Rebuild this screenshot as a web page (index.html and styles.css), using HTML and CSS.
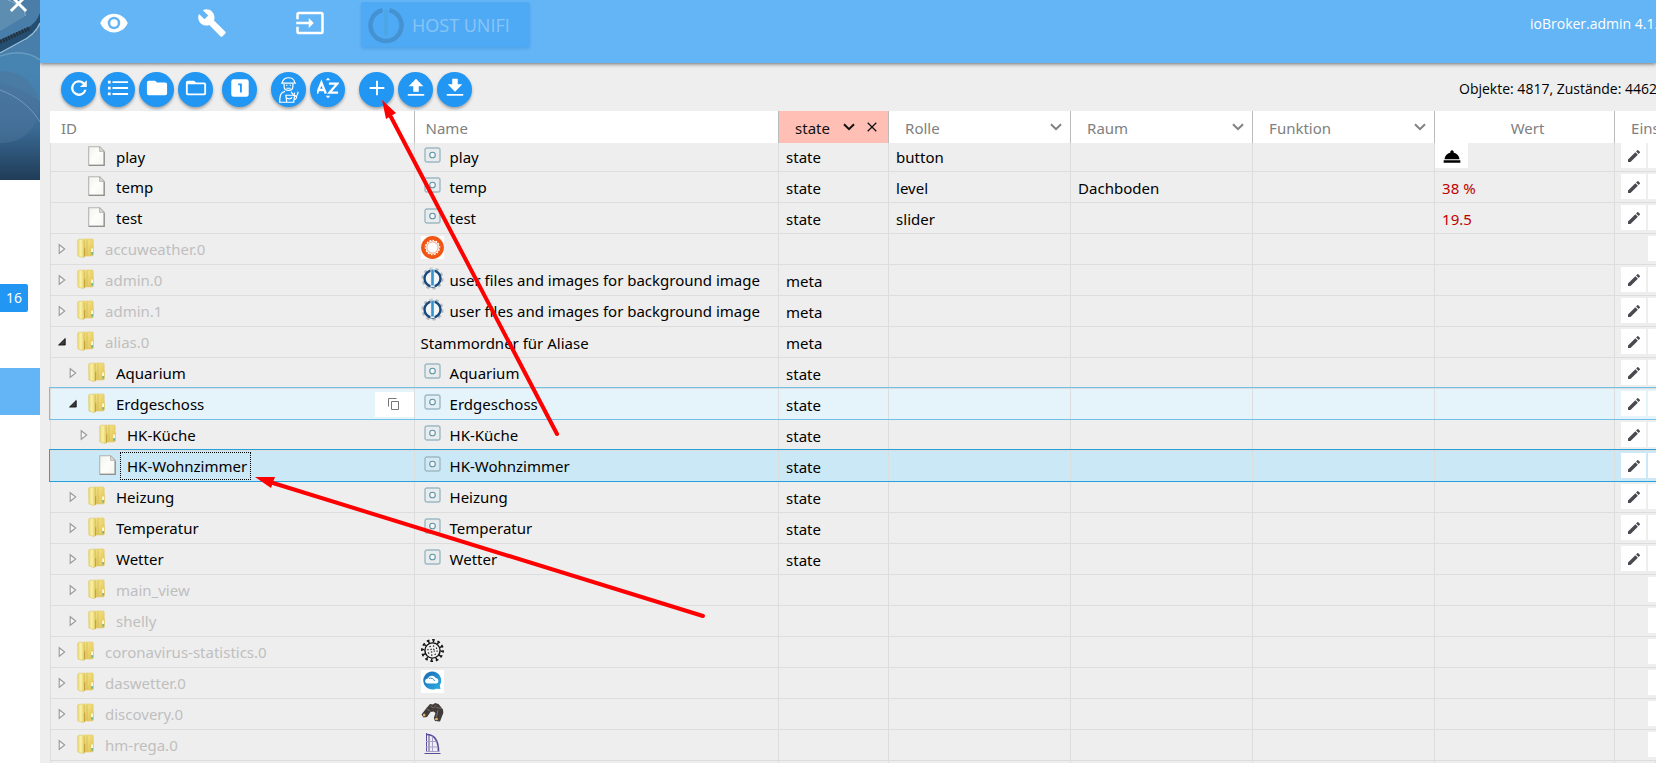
FILE: index.html
```html
<!DOCTYPE html>
<html lang="de">
<head>
<meta charset="utf-8">
<title>ioBroker.admin</title>
<link rel="stylesheet" href="styles.css">
</head>
<body>
<svg class="defs" aria-hidden="true">
  <defs>
    <linearGradient id="g-front" x1="0" x2="1" y1="0" y2="0"><stop offset="0" stop-color="#ead773"/><stop offset=".45" stop-color="#faf2a6"/><stop offset="1" stop-color="#dcc052"/></linearGradient>
    <linearGradient id="g-back" x1="0" x2="1" y1="0" y2="1"><stop offset="0" stop-color="#f7e98e"/><stop offset="1" stop-color="#dfc04e"/></linearGradient>
    <linearGradient id="g-doc" x1="0" x2="1" y1="0" y2="1"><stop offset="0" stop-color="#f1f3ec"/><stop offset=".5" stop-color="#fdfefb"/><stop offset="1" stop-color="#f3f5ef"/></linearGradient>
    <linearGradient id="g-photo" x1="0" x2="0" y1="0" y2="1"><stop offset="0" stop-color="#4b7da8"/><stop offset=".4" stop-color="#467fac"/><stop offset=".7" stop-color="#3b6c97"/><stop offset="1" stop-color="#1f3c57"/></linearGradient>
    <linearGradient id="g-cloud" x1="0" x2="1" y1="0" y2="1"><stop offset="0" stop-color="#1768b4"/><stop offset="1" stop-color="#2fb0e4"/></linearGradient>
  </defs>
  <symbol id="folder" viewBox="0 0 17 20">
    <path d="M7 1h8.200q1 0 1 1v6l.5 1v7.500L15.500 18H7z" fill="url(#g-back)" stroke="#e0cb74" stroke-width=".6"/>
    <path d="M10 1.500v16" stroke="#d3b650" stroke-width=".8"/>
    <path d="M.6 2.600Q1 1.200 2.200 1.200h4.200L8 2.600v15.600l-1.600 1.400L.9 18z" fill="url(#g-front)" stroke="#dcc76a" stroke-width=".6"/>
    <path d="M7 11v8l1.200-1V9z" fill="#b8912f" opacity=".7"/>
    <path d="M14.200 10.500h1.800V14h-1.800z" fill="#fffbe0"/><path d="M14.400 14.200h1.600v2.200h-1.600z" fill="#5fb7a5"/>
  </symbol>
  <symbol id="doc" viewBox="0 0 17 20">
    <path d="M.7.7h11l4.500 4.600v14H.7z" fill="url(#g-doc)" stroke="#b3b4b1" stroke-width="1.100"/>
    <path d="M.8 19.300h15.400V6" fill="none" stroke="#8f908d" stroke-width="1.200"/>
    <path d="M11.600.8v4.600h4.500z" fill="#deded9" stroke="#aaaba8" stroke-width=".8"/>
  </symbol>
  <symbol id="closed" viewBox="0 0 8 12"><path d="M1.200 1.700v8.600L6.700 6z" fill="#f7f7f7" stroke="#999" stroke-width="1.100"/></symbol>
  <symbol id="open" viewBox="0 0 8 12"><path d="M7.200 2.500v6.500H.6z" fill="#3a3a3a" stroke="#111" stroke-width=".9" stroke-linejoin="round"/></symbol>
  <symbol id="state" viewBox="0 0 17 16"><rect x="1" y="1" width="15" height="14" rx="2" fill="#dfe9ec" fill-opacity=".4" stroke="#9cb9c5" stroke-width="1.400"/><circle cx="8.500" cy="8" r="2.800" fill="#f3f7f8" stroke="#5f93a8" stroke-width="1.100"/></symbol>
  <symbol id="iob" viewBox="0 0 23 23"><circle cx="11.500" cy="11.500" r="9.900" fill="none" stroke="#b5b9bd" stroke-width="2.400" stroke-dasharray="3.100 3.100"/><circle cx="11.500" cy="11.500" r="8" fill="#f4f6f8" stroke="#174b80" stroke-width="2.400"/><rect x="9.500" y="1.500" width="4" height="18.500" fill="#eef1f3"/><rect x="10.200" y="2.500" width="2.600" height="16" fill="#3595ca"/></symbol>
  <symbol id="pencil" viewBox="0 0 24 24"><path d="M3 17.250V21h3.750L17.810 9.940l-3.750-3.750zM20.710 7.040a1 1 0 0 0 0-1.410l-2.340-2.340a1 1 0 0 0-1.410 0l-1.830 1.830 3.750 3.750z" fill="#484a50"/></symbol>
  <symbol id="bin" viewBox="0 0 24 24"><path d="M6 19a2 2 0 0 0 2 2h8a2 2 0 0 0 2-2V7H6zM19 4h-3.500l-1-1h-5l-1 1H5v2h14z" fill="#f6c48b"/></symbol>
  <symbol id="chev" viewBox="0 0 12 8"><path d="M1 1.200 6 6.200 11 1.200" fill="none" stroke="currentColor" stroke-width="2"/></symbol>
</svg>

<div class="app">
  <aside class="side">
    <div class="photo">
      <svg class="photo-art" viewBox="0 0 40 180" preserveAspectRatio="none" aria-hidden="true">
        <rect width="40" height="180" fill="url(#g-photo)"/>
        <path d="M0 0h8c10 4 17 10 16 17L0 31z" fill="#6593b5" opacity=".75"/>
        <path d="M8 0c11 4 18 10 17 16" fill="none" stroke="#84aecb" stroke-width="1.200"/>
        <path d="M0 40 29 27c6-4 9-9 11-14v10C37 32 31 38 21 42L0 53z" fill="#1f4668" opacity=".85"/>
        <path d="M0 42 30 28" stroke="#26323e" stroke-width="4" stroke-dasharray="2 1"/>
        <path d="M0 53 20 42c9-4 16-9 20-19" fill="none" stroke="#98bfd8" stroke-width="1.300"/>
        <path d="M0 57c15-6 29-5 40 4v40C27 92 12 85 0 82z" fill="#4787b4" opacity=".6"/>
        <path d="M0 56c15-5 29-4 40 4" fill="none" stroke="#74a9c9" stroke-width="1.500" opacity=".7"/>
        <circle cx="3" cy="107" r="36" fill="#4d7399" opacity=".5"/>
        <path d="M0 90c17 6 31 17 40 32" fill="none" stroke="#82abc8" stroke-width="1" opacity=".7"/>
      </svg>
      <button class="side-close" aria-label="Menü schließen"><svg viewBox="0 0 20 20"><path d="m2 2 16 16M18 2 2 18" stroke="#fff" stroke-width="3"/></svg></button>
    </div>
    <span class="count">16</span>
    <div class="side-active"></div>
  </aside>

  <div class="main">
    <header class="top">
      <nav class="top-nav">
        <button aria-label="Sichtbarkeit"><svg viewBox="0 0 24 24"><path d="M12 4.500C7 4.500 2.730 7.610 1 12c1.730 4.390 6 7.500 11 7.500s9.270-3.110 11-7.500c-1.730-4.390-6-7.500-11-7.500zM12 17a5 5 0 1 1 0-10 5 5 0 0 1 0 10zm0-8a3 3 0 1 0 0 6 3 3 0 0 0 0-6z"/></svg></button>
        <button aria-label="Systemeinstellungen"><svg viewBox="0 0 24 24"><path d="m22.700 19-9.100-9.100c.9-2.300.4-5-1.500-6.900-2-2-5-2.400-7.400-1.300L9 6 6 9 1.600 4.700C.4 7.100.9 10.100 2.900 12.100c1.900 1.900 4.600 2.400 6.900 1.500l9.100 9.100c.4.400 1 .4 1.400 0l2.300-2.300c.5-.4.5-1.100.1-1.400z"/></svg></button>
        <button aria-label="Anmelden"><svg viewBox="0 0 24 24"><path d="M21 3H3a2 2 0 0 0-2 2v4h2V5h18v14H3v-4H1v4a2 2 0 0 0 2 2h18a2 2 0 0 0 2-2V5a2 2 0 0 0-2-2zM11 16l4-4-4-4v3H1v2h10z"/></svg></button>
      </nav>
      <button class="host" disabled>
        <svg viewBox="0 0 36 40" aria-hidden="true"><path d="M21.500 5.300a15.500 15.500 0 1 1-7 0" fill="none" stroke="#4592d2" stroke-width="4.500"/><rect x="16" y="5" width="4" height="26" fill="#4da6e6"/></svg>
        HOST UNIFI
      </button>
      <span class="version">ioBroker.admin 4.1.</span>
    </header>

    <div class="tools">
      <button aria-label="Aktualisieren"><svg viewBox="0 0 24 24"><path d="M17.900 6.100A8.500 8.500 0 1 0 20.200 14h-2.600A6 6 0 1 1 12 6c1.660 0 3.140.69 4.220 1.780L13 11h7.500V3.500z"/></svg></button>
      <button aria-label="Listenansicht"><svg viewBox="0 0 24 24"><path d="M1 4h3v3H1zm0 6.500h3v3H1zM1 17h3v3H1zM6 4.500h17v2H6zM6 11h17v2H6zm0 6.500h17v2H6z"/></svg></button>
      <button aria-label="Alle zuklappen"><svg viewBox="0 0 24 24"><path d="M10 4H3a2 2 0 0 0-2 2v12a2 2 0 0 0 2 2h18a2 2 0 0 0 2-2V8a2 2 0 0 0-2-2h-9z"/></svg></button>
      <button aria-label="Alle aufklappen"><svg viewBox="0 0 24 24"><path d="M21 6h-9l-2-2H3a2 2 0 0 0-2 2v12a2 2 0 0 0 2 2h18a2 2 0 0 0 2-2V8a2 2 0 0 0-2-2zm0 12H3V8h18z"/></svg></button>
      <button class="gap-s" aria-label="Eine Ebene"><svg viewBox="0 0 24 24"><path d="M19 2.500H5A2.500 2.500 0 0 0 2.500 5v14A2.500 2.500 0 0 0 5 21.500h14a2.500 2.500 0 0 0 2.500-2.500V5A2.500 2.500 0 0 0 19 2.500zM14 17h-2V9h-2V7h4z"/></svg></button>
      <button class="gap-m" aria-label="Expertenmodus"><svg class="tall" viewBox="0 0 24 32"><g fill="none" stroke="#fff" stroke-width="1.400"><path d="M5 8c0-8 14-8 14 0zM3.500 8.200h17M7 9v3c0 6 10 6 10 0V9M9.500 14h5"/><path d="M8 17.500C3 18.500 2 22 2 30h8M10 30l-1-8h10l-1 8zM9 24c2 3 6 3 7 0M15 18l2 3M17 28c4-1 5-4 4-6M19 19l-1 3 3 1M22 22l1-4"/></g><circle cx="10" cy="10.500" r=".8"/><circle cx="14" cy="10.500" r=".8"/></svg></button>
      <button aria-label="Sortieren"><svg viewBox="0 0 24 24"><path d="M9.500 3.500h5L12 .8zM9.500 20.500h5L12 23.200z"/><path d="m0 18 4.800-12 4.800 12M2 14.200h5.600M13 7.200h9.300L13.700 17h9.300" fill="none" stroke="#fff" stroke-width="2.500"/></svg></button>
      <button class="gap-m" aria-label="Hinzufügen"><svg viewBox="0 0 24 24"><path d="M20 13h-7v7h-2v-7H4v-2h7V4h2v7h7z"/></svg></button>
      <button aria-label="Hochladen"><svg viewBox="0 0 24 24"><path d="M9 16h6v-6h5l-8-8-8 8h5zM3 18.500h18v2H3z"/></svg></button>
      <button aria-label="Herunterladen"><svg viewBox="0 0 24 24"><path d="M20 8h-5V2H9v6H4l8 8zM3 18.500h18v2H3z"/></svg></button>
      <span class="stats">Objekte: 4817, Zustände: 4462</span>
    </div>

    <table class="grid">
      <colgroup><col class="c-wide"><col class="c-wide"><col class="c-type"><col class="c-mid"><col class="c-mid"><col class="c-mid"><col class="c-val"><col></colgroup>
      <thead>
        <tr>
          <th><input class="filter" aria-label="ID" placeholder="ID"></th>
          <th><input class="filter" aria-label="Name" placeholder="Name"></th>
          <th class="picked"><div class="pick"><select aria-label="Typ"><option>state</option></select><svg class="chev"><use href="#chev"/></svg><button aria-label="Filter löschen"><svg viewBox="0 0 10 10"><path d="m.7.7 8.600 8.600M9.300.7.7 9.300" stroke="#111" stroke-width="1.300"/></svg></button></div></th>
          <th><div class="pick"><select aria-label="Rolle"><option>Rolle</option></select><svg class="chev"><use href="#chev"/></svg></div></th>
          <th><div class="pick"><select aria-label="Raum"><option>Raum</option></select><svg class="chev"><use href="#chev"/></svg></div></th>
          <th><div class="pick"><select aria-label="Funktion"><option>Funktion</option></select><svg class="chev"><use href="#chev"/></svg></div></th>
          <th class="mid">Wert</th>
          <th class="set">Eins</th>
        </tr>
      </thead>
      <tbody>
        <tr class="first"><td><div class="id l1"><i></i><svg class="ic"><use href="#doc"/></svg><span>play</span></div></td><td><div class="nm"><svg class="st"><use href="#state"/></svg>play</div></td><td>state</td><td>button</td><td></td><td></td><td class="press"><button aria-label="Auslösen"><svg viewBox="0 0 24 24"><path d="M2 17h20v3H2zM13.840 7.790A2 2 0 1 0 10.160 7.790 9.500 9.500 0 0 0 3 16h18a9.500 9.500 0 0 0-7.160-8.210z"/></svg></button></td><td class="act"><div><button aria-label="Bearbeiten"><svg><use href="#pencil"/></svg></button><button aria-label="Löschen"><svg><use href="#bin"/></svg></button></div></td></tr>
        <tr><td><div class="id l1"><i></i><svg class="ic"><use href="#doc"/></svg><span>temp</span></div></td><td><div class="nm"><svg class="st"><use href="#state"/></svg>temp</div></td><td>state</td><td>level</td><td>Dachboden</td><td></td><td class="red">38 %</td><td class="act"><div><button aria-label="Bearbeiten"><svg><use href="#pencil"/></svg></button><button aria-label="Löschen"><svg><use href="#bin"/></svg></button></div></td></tr>
        <tr><td><div class="id l1"><i></i><svg class="ic"><use href="#doc"/></svg><span>test</span></div></td><td><div class="nm"><svg class="st"><use href="#state"/></svg>test</div></td><td>state</td><td>slider</td><td></td><td></td><td class="red">19.5</td><td class="act"><div><button aria-label="Bearbeiten"><svg><use href="#pencil"/></svg></button><button aria-label="Löschen"><svg><use href="#bin"/></svg></button></div></td></tr>
        <tr><td><div class="id dim"><button aria-label="Öffnen"><svg><use href="#closed"/></svg></button><svg class="ic"><use href="#folder"/></svg><span>accuweather.0</span></div></td><td><div class="nm"><svg class="ad" viewBox="0 0 23 23"><path d="M0 0h23v23H0z" fill="#fff"/><circle cx="11.500" cy="11.500" r="9.600" fill="none" stroke="#f05514" stroke-width="3.600"/><circle cx="11.500" cy="11.500" r="7.400" fill="none" stroke="#f05514" stroke-width="1.200" stroke-dasharray="1.900 1.400"/><circle cx="11.500" cy="11.500" r="5.600" fill="#fff" stroke="#f0703a" stroke-width=".7"/></svg></div></td><td></td><td></td><td></td><td></td><td></td><td class="act"><div><button aria-label="Löschen"><svg><use href="#bin"/></svg></button></div></td></tr>
        <tr><td><div class="id dim"><button aria-label="Öffnen"><svg><use href="#closed"/></svg></button><svg class="ic"><use href="#folder"/></svg><span>admin.0</span></div></td><td><div class="nm"><svg class="ad"><use href="#iob"/></svg>user files and images for background image</div></td><td>meta</td><td></td><td></td><td></td><td></td><td class="act"><div><button aria-label="Bearbeiten"><svg><use href="#pencil"/></svg></button><button aria-label="Löschen"><svg><use href="#bin"/></svg></button></div></td></tr>
        <tr><td><div class="id dim"><button aria-label="Öffnen"><svg><use href="#closed"/></svg></button><svg class="ic"><use href="#folder"/></svg><span>admin.1</span></div></td><td><div class="nm"><svg class="ad"><use href="#iob"/></svg>user files and images for background image</div></td><td>meta</td><td></td><td></td><td></td><td></td><td class="act"><div><button aria-label="Bearbeiten"><svg><use href="#pencil"/></svg></button><button aria-label="Löschen"><svg><use href="#bin"/></svg></button></div></td></tr>
        <tr><td><div class="id dim"><button aria-label="Schließen"><svg><use href="#open"/></svg></button><svg class="ic"><use href="#folder"/></svg><span>alias.0</span></div></td><td class="plain">Stammordner für Aliase</td><td>meta</td><td></td><td></td><td></td><td></td><td class="act"><div><button aria-label="Bearbeiten"><svg><use href="#pencil"/></svg></button><button aria-label="Löschen"><svg><use href="#bin"/></svg></button></div></td></tr>
        <tr><td><div class="id l1"><button aria-label="Öffnen"><svg><use href="#closed"/></svg></button><svg class="ic"><use href="#folder"/></svg><span>Aquarium</span></div></td><td><div class="nm"><svg class="st"><use href="#state"/></svg>Aquarium</div></td><td>state</td><td></td><td></td><td></td><td></td><td class="act"><div><button aria-label="Bearbeiten"><svg><use href="#pencil"/></svg></button><button aria-label="Löschen"><svg><use href="#bin"/></svg></button></div></td></tr>
        <tr class="hover"><td><div class="id l1"><button aria-label="Schließen"><svg><use href="#open"/></svg></button><svg class="ic"><use href="#folder"/></svg><span>Erdgeschoss</span><button class="copy" aria-label="Kopieren"><svg viewBox="0 0 12 12"><path d="M3.500 3.500h7v8h-7zM8.500.500h-8v8" fill="none" stroke="#777"/></svg></button></div></td><td><div class="nm"><svg class="st"><use href="#state"/></svg>Erdgeschoss</div></td><td>state</td><td></td><td></td><td></td><td></td><td class="act"><div><button aria-label="Bearbeiten"><svg><use href="#pencil"/></svg></button><button aria-label="Löschen"><svg><use href="#bin"/></svg></button></div></td></tr>
        <tr><td><div class="id l2"><button aria-label="Öffnen"><svg><use href="#closed"/></svg></button><svg class="ic"><use href="#folder"/></svg><span>HK-Küche</span></div></td><td><div class="nm"><svg class="st"><use href="#state"/></svg>HK-Küche</div></td><td>state</td><td></td><td></td><td></td><td></td><td class="act"><div><button aria-label="Bearbeiten"><svg><use href="#pencil"/></svg></button><button aria-label="Löschen"><svg><use href="#bin"/></svg></button></div></td></tr>
        <tr class="sel"><td><div class="id l2"><i></i><svg class="ic"><use href="#doc"/></svg><span class="focus">HK-Wohnzimmer</span></div></td><td><div class="nm"><svg class="st"><use href="#state"/></svg>HK-Wohnzimmer</div></td><td>state</td><td></td><td></td><td></td><td></td><td class="act"><div><button aria-label="Bearbeiten"><svg><use href="#pencil"/></svg></button><button aria-label="Löschen"><svg><use href="#bin"/></svg></button></div></td></tr>
        <tr><td><div class="id l1"><button aria-label="Öffnen"><svg><use href="#closed"/></svg></button><svg class="ic"><use href="#folder"/></svg><span>Heizung</span></div></td><td><div class="nm"><svg class="st"><use href="#state"/></svg>Heizung</div></td><td>state</td><td></td><td></td><td></td><td></td><td class="act"><div><button aria-label="Bearbeiten"><svg><use href="#pencil"/></svg></button><button aria-label="Löschen"><svg><use href="#bin"/></svg></button></div></td></tr>
        <tr><td><div class="id l1"><button aria-label="Öffnen"><svg><use href="#closed"/></svg></button><svg class="ic"><use href="#folder"/></svg><span>Temperatur</span></div></td><td><div class="nm"><svg class="st"><use href="#state"/></svg>Temperatur</div></td><td>state</td><td></td><td></td><td></td><td></td><td class="act"><div><button aria-label="Bearbeiten"><svg><use href="#pencil"/></svg></button><button aria-label="Löschen"><svg><use href="#bin"/></svg></button></div></td></tr>
        <tr><td><div class="id l1"><button aria-label="Öffnen"><svg><use href="#closed"/></svg></button><svg class="ic"><use href="#folder"/></svg><span>Wetter</span></div></td><td><div class="nm"><svg class="st"><use href="#state"/></svg>Wetter</div></td><td>state</td><td></td><td></td><td></td><td></td><td class="act"><div><button aria-label="Bearbeiten"><svg><use href="#pencil"/></svg></button><button aria-label="Löschen"><svg><use href="#bin"/></svg></button></div></td></tr>
        <tr><td><div class="id l1 dim"><button aria-label="Öffnen"><svg><use href="#closed"/></svg></button><svg class="ic"><use href="#folder"/></svg><span>main_view</span></div></td><td></td><td></td><td></td><td></td><td></td><td></td><td class="act"><div><button aria-label="Löschen"><svg><use href="#bin"/></svg></button></div></td></tr>
        <tr><td><div class="id l1 dim"><button aria-label="Öffnen"><svg><use href="#closed"/></svg></button><svg class="ic"><use href="#folder"/></svg><span>shelly</span></div></td><td></td><td></td><td></td><td></td><td></td><td></td><td class="act"><div><button aria-label="Löschen"><svg><use href="#bin"/></svg></button></div></td></tr>
        <tr><td><div class="id dim"><button aria-label="Öffnen"><svg><use href="#closed"/></svg></button><svg class="ic"><use href="#folder"/></svg><span>coronavirus-statistics.0</span></div></td><td><div class="nm"><svg class="ad" viewBox="0 0 23 23"><g fill="none" stroke="#111"><circle cx="11.500" cy="11.500" r="7.600" stroke-width="1.400"/><circle cx="11.500" cy="11.500" r="9.200" stroke-width="2.200" stroke-dasharray="1.500 3.317"/><circle cx="11.500" cy="11.500" r="10.700" stroke-width="1.500" stroke-dasharray="2.800 2.802" stroke-dashoffset=".7"/><circle cx="11.500" cy="11.500" r="4.600" stroke-width="1.100" stroke-dasharray="1.300 2.300"/><circle cx="11.500" cy="11.500" r="1.800" stroke-width="1.100" stroke-dasharray="1.200 1.600"/></g></svg></div></td><td></td><td></td><td></td><td></td><td></td><td class="act"><div><button aria-label="Löschen"><svg><use href="#bin"/></svg></button></div></td></tr>
        <tr><td><div class="id dim"><button aria-label="Öffnen"><svg><use href="#closed"/></svg></button><svg class="ic"><use href="#folder"/></svg><span>daswetter.0</span></div></td><td><div class="nm"><svg class="ad" viewBox="0 0 23 23"><path d="M0 0h23v23H0z" fill="#fff"/><path d="M11 1.500a9 9 0 1 0 4 17.200l4.500.2-.7-3.700A9 9 0 0 0 11 1.500z" fill="url(#g-cloud)"/><path d="M7 13.500c-4 0-3.500-5 0-5C8 4.500 14 5 14.500 8c3.500-.2 4 5.500.5 5.500z" fill="#fff"/><path d="M8 8.500c2-1 5 0 5.500 2.500" fill="none" stroke="#2a8dcc"/></svg></div></td><td></td><td></td><td></td><td></td><td></td><td class="act"><div><button aria-label="Löschen"><svg><use href="#bin"/></svg></button></div></td></tr>
        <tr><td><div class="id dim"><button aria-label="Öffnen"><svg><use href="#closed"/></svg></button><svg class="ic"><use href="#folder"/></svg><span>discovery.0</span></div></td><td><div class="nm"><svg class="ad" viewBox="0 0 23 23"><path d="m.5 13.500 5-6.500L9 3l3 .5 2-1.500 3.500 1L22 8.500l.3 3.500-3.300 8.500-5-.5-1.200-3 1.700-5-2-1.500-3 .5L6 16l-3.500.5z" fill="#403a39"/><path d="m6 8 3.500 2.500M15 6.500l5.500 1M9.500 5l3 2 3-3M17 9l-1.500 7" stroke="#77706e" fill="none"/><ellipse cx="3.200" cy="14" rx="1.300" ry="1.500" fill="#d9b55d"/><ellipse cx="15.500" cy="18" rx="1.500" ry="1.300" fill="#d9b55d"/></svg></div></td><td></td><td></td><td></td><td></td><td></td><td class="act"><div><button aria-label="Löschen"><svg><use href="#bin"/></svg></button></div></td></tr>
        <tr><td><div class="id dim"><button aria-label="Öffnen"><svg><use href="#closed"/></svg></button><svg class="ic"><use href="#folder"/></svg><span>hm-rega.0</span></div></td><td><div class="nm"><svg class="ad" viewBox="0 0 23 23"><g fill="none" stroke="#5a4c99"><path d="M5.500 1v19M8 2.500V20M3.500 21.500h16" stroke-width="1"/><path d="M5.500 2.500C13 2.500 17.500 7 17.500 20" stroke-width="1.700"/><path d="M5 9.500h10.500M5 15h12M5 19.500h13M11.500 4.500V20" stroke="#a79fcb"/></g></svg></div></td><td></td><td></td><td></td><td></td><td></td><td class="act"><div><button aria-label="Löschen"><svg><use href="#bin"/></svg></button></div></td></tr>
        <tr><td></td><td></td><td></td><td></td><td></td><td></td><td></td><td></td></tr>
      </tbody>
    </table>
  </div>

  <svg class="arrows" width="720" height="640" viewBox="0 0 720 640" aria-hidden="true">
    <g stroke="#f00" stroke-width="4" stroke-linecap="round">
      <path d="M557 434 391 117"/>
      <path d="M703 616 273 483"/>
    </g>
    <path d="m382 100 14 13-10 6zM255 477h20l-4 11z" fill="#f00"/>
  </svg>
</div>
</body>
</html>
```
FILE: styles.css
```css
* { box-sizing: border-box; }

body {
  margin: 0;
  height: 100vh;
  overflow: hidden;
  background: #eee;
  color: #000;
  font: 15px/20px "Noto Sans", "Open Sans", sans-serif;
}

button, input, select {
  margin: 0;
  padding: 0;
  border: 0;
  background: none;
  color: inherit;
  font: inherit;
}

button { display: flex; align-items: center; justify-content: center; }
svg { display: block; flex: none; }

.defs { position: absolute; width: 0; height: 0; }
.app { position: relative; display: flex; height: 100vh; overflow: hidden; }

/* Sidebar */
.side { flex: none; width: 40px; background: #fff; }
.photo { position: relative; height: 180px; overflow: hidden; }
.photo-art { width: 100%; height: 100%; }
.side-close { position: absolute; top: -6px; right: 12px; }
.side-close svg { width: 19px; height: 19px; }
.count {
  display: block;
  width: 28px;
  margin: 104px 0 56px;
  border-radius: 0 2px 2px 0;
  background: #2196f3;
  color: #fff;
  font-size: 14px;
  line-height: 28px;
  text-align: center;
}
.side-active { height: 47px; background: #64b5f6; }

/* Header bar */
.main { flex: 1; min-width: 0; }
.top {
  display: flex;
  align-items: flex-start;
  height: 63px;
  background: #64b5f6;
  box-shadow: 0 1px 4px rgba(0, 0, 0, .55);
}
.top-nav { display: flex; gap: 68px; padding: 8px 0 0 59px; }
.top-nav svg { width: 30px; height: 30px; fill: #fff; }
.host {
  gap: 8px;
  height: 45px;
  margin: 2px 0 0 36px;
  padding: 0 20px 0 7px;
  border-radius: 3px;
  background: #4faaf5;
  box-shadow: 0 2px 3px rgba(30, 110, 190, .25);
  color: #8ac4f5;
  font-family: "Open Sans", "Noto Sans", sans-serif;
  font-size: 18px;
}
.host svg { width: 36px; height: 40px; }
.version {
  width: 126px;
  margin: 14px 0 0 auto;
  color: #fff;
  font-family: "Open Sans", "Noto Sans", sans-serif;
  font-size: 14px;
  white-space: nowrap;
}

/* Toolbar */
.tools { display: flex; gap: 4px; height: 48px; padding: 9px 0 0 21px; }
.tools button {
  width: 35px;
  height: 35px;
  border-radius: 50%;
  background: #2196f3;
  box-shadow: 0 2px 3px rgba(0, 0, 0, .3);
}
.tools svg { width: 22px; height: 22px; fill: #fff; margin-bottom: 3px; }
.tools .tall { width: 21px; height: 28px; margin: 0; }
.tools .gap-s { margin-left: 5px; }
.tools .gap-m { margin-left: 10px; }
.stats {
  width: 197px;
  margin: 7px 0 0 auto;
  font-family: "Open Sans", "Noto Sans", sans-serif;
  font-size: 14px;
  white-space: nowrap;
}

/* Object table */
.grid {
  width: calc(100% - 10px);
  margin-left: 10px;
  border-spacing: 0;
  table-layout: fixed;
}
.c-wide { width: 22.7%; }
.c-type { width: 110px; }
.c-mid { width: 182px; }
.c-val { width: 180px; }

th {
  height: 32px;
  padding: 2px 0 0 11px;
  border-right: 1px solid #bbb;
  background: #fff;
  color: #808080;
  font-weight: 400;
  text-align: left;
  white-space: nowrap;
  overflow: hidden;
}
th.mid { padding-left: 6px; text-align: center; }
th.set { padding-left: 16px; border: 0; }
.filter { width: 100%; outline: 0; }
.filter::placeholder { color: #808080; opacity: 1; }
.picked { background: #ffbfb5; color: #111; }
.pick { display: flex; align-items: center; padding: 0 8px 0 5px; }
.picked .pick { padding-right: 11px; gap: 12px; }
.pick select { flex: 1; min-width: 0; appearance: none; outline: 0; }
.chev { width: 12px; height: 8px; margin-bottom: 2px; }
.pick button { padding-bottom: 3px; }
.pick button svg { width: 10px; height: 10px; }

td {
  height: 31px;
  padding: 2px 0 0 7px;
  border: solid #ddd;
  border-width: 0 1px 1px 0;
  white-space: nowrap;
  overflow: hidden;
}
td:first-child { padding: 0; border-left: 1px solid #ddd; }
td:nth-child(2) { padding: 0 0 0 6px; }
td.plain { padding-top: 2px; }
.first td { height: 29px; padding-top: 0; }
.red { color: #c00000; }

.id { display: flex; align-items: center; height: 25px; padding-left: 7px; }
.id.l1 { padding-left: 18px; }
.id.l2 { padding-left: 29px; }
.id i, .id button { width: 8px; }
.id button svg { width: 8px; height: 12px; }
.id .ic { width: 17px; height: 20px; margin: 0 5px 3px 11px; }
.id span { padding: 0 6px; }
.dim span { color: #bfbfbf; }
.id .focus { padding: 3px 3px 3px 6px; outline: 1px dotted #000; }
.id .copy { width: 39px; height: 25px; margin-left: auto; background: #fff; }
.id .copy svg { width: 12px; height: 12px; }

.nm { display: flex; align-items: center; height: 25px; }
.st { width: 17px; height: 16px; margin: 0 9px 4px 3px; }
.ad { width: 23px; height: 23px; margin: 0 6px 4px 0; }

.first .press { padding: 0; vertical-align: top; }
.press button { width: 33px; height: 25px; background: #fff; }
.press svg { width: 20px; height: 20px; }
.act { padding: 2px 0 0 6px; vertical-align: top; border-right: 0; }
.act div { display: flex; justify-content: flex-start; gap: 2px; }
.act button { flex: none; width: 25px; height: 25px; background: #fff; }
.act button:only-child { margin-left: 27px; }
.act svg { width: 16px; height: 16px; }

/* Highlighted rows get a frame that also covers the row line above */
.hover { background: #e5f3fb; }
.sel { background: #cbe8f6; }
.hover td:first-child, .sel td:first-child { position: relative; overflow: visible; }
.hover td:first-child::after, .sel td:first-child::after {
  content: "";
  position: absolute;
  top: -2px;
  bottom: -1px;
  left: -2px;
  width: 100vw;
  border: 1px solid #70c0e7;
  pointer-events: none;
}
.sel td:first-child::after { border-color: #26a0da; }

.arrows { position: absolute; top: 0; left: 0; pointer-events: none; }
```
